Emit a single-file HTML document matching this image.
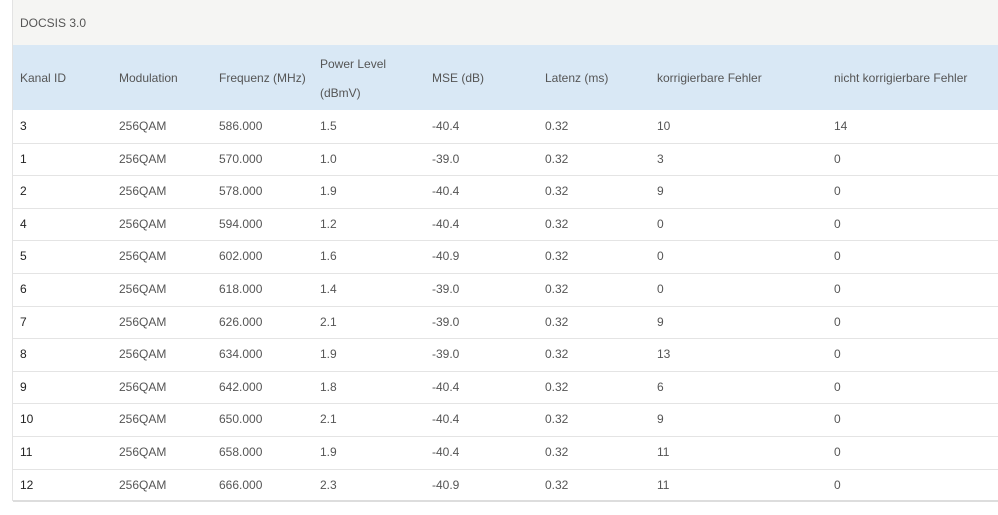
<!DOCTYPE html>
<html><head><meta charset="utf-8"><style>
body{margin:0;width:998px;height:515px;background:#fff;font-family:"Liberation Sans",sans-serif;font-size:12px;color:#555;overflow:hidden;position:relative}
.panel{position:absolute;left:12px;top:-1px;width:990px;height:502px;border:1px solid #e3e3e3;box-sizing:border-box}
.hd{position:absolute;left:13px;top:0;width:985px;height:45px;background:#f5f5f3}
.th{position:absolute;left:13px;top:45px;width:985px;height:65px;background:#d9e8f5}
.t{position:absolute;white-space:nowrap}
.line{position:absolute;left:13px;width:985px;height:1px;background:#e4e4e4}
.b{color:#222}
</style></head><body>
<div class="panel"></div>
<div class="hd"></div>
<div class="th"></div>
<div class="t" style="left:20px;top:16px">DOCSIS 3.0</div>
<div class="t" style="left:20px;top:71px">Kanal ID</div>
<div class="t" style="left:119px;top:71px">Modulation</div>
<div class="t" style="left:219px;top:71px">Frequenz (MHz)</div>
<div class="t" style="left:320px;top:57px">Power Level</div>
<div class="t" style="left:320px;top:86px">(dBmV)</div>
<div class="t" style="left:432px;top:71px">MSE (dB)</div>
<div class="t" style="left:545px;top:71px">Latenz (ms)</div>
<div class="t" style="left:657px;top:71px">korrigierbare Fehler</div>
<div class="t" style="left:834px;top:71px">nicht korrigierbare Fehler</div>
<div id="rows"></div>
<script>
var d=[["3","586.000","1.5","-40.4","10","14"],["1","570.000","1.0","-39.0","3","0"],["2","578.000","1.9","-40.4","9","0"],["4","594.000","1.2","-40.4","0","0"],["5","602.000","1.6","-40.9","0","0"],["6","618.000","1.4","-39.0","0","0"],["7","626.000","2.1","-39.0","9","0"],["8","634.000","1.9","-39.0","13","0"],["9","642.000","1.8","-40.4","6","0"],["10","650.000","2.1","-40.4","9","0"],["11","658.000","1.9","-40.4","11","0"],["12","666.000","2.3","-40.9","11","0"]];
var h="";
d.forEach(function(r,i){var y=110+i*32.6;var ty=y+9;
if(i>0)h+='<div class="line" style="top:'+Math.round(y)+'px"></div>';
var c=[[20,r[0],1],[119,"256QAM"],[219,r[1]],[320,r[2]],[432,r[3]],[545,"0.32"],[657,r[4]],[834,r[5]]];
c.forEach(function(x){h+='<div class="t'+(x[2]?' b':'')+'" style="left:'+x[0]+'px;top:'+Math.round(ty)+'px">'+x[1]+'</div>'});});
h+='<div class="line" style="top:500px;background:#ddd;height:2px"></div>';
document.getElementById("rows").innerHTML=h;
</script>
</body></html>
